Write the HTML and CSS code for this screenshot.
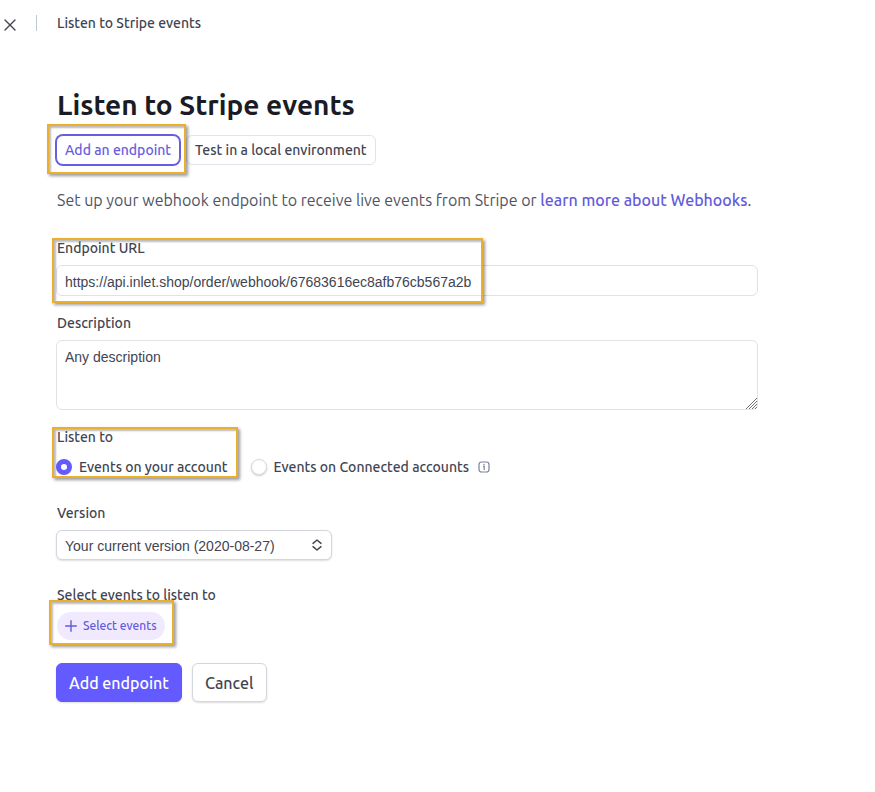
FILE: index.html
```html
<!DOCTYPE html>
<html lang="en">
<head>
<meta charset="utf-8">
<meta name="viewport" content="width=device-width, initial-scale=1">
<title>Listen to Stripe events</title>
<link rel="stylesheet" href="styles.css">
</head>
<body>
<header class="topbar">
  <button class="close" type="button" aria-label="Close">
    <svg width="12" height="12" viewBox="0 0 12 12" fill="none" stroke="currentColor" stroke-width="1.4" stroke-linecap="round"><path d="M1 1l10 10M11 1L1 11"/></svg>
  </button>
  <span class="divider"></span>
  <span class="crumb">Listen to Stripe events</span>
</header>
<main class="page">
  <h1>Listen to Stripe events</h1>
  <div class="tabs">
    <div class="marked mark-tab"><button class="tab active" type="button">Add an endpoint</button></div>
    <button class="tab" type="button">Test in a local environment</button>
  </div>
  <p class="intro">Set up your webhook endpoint to receive live events from Stripe or <a href="#webhooks">learn more about Webhooks</a>.</p>
  <form>
    <div class="field marked mark-url">
      <label for="url">Endpoint URL</label>
      <input class="control" id="url" type="text" value="https://api.inlet.shop/order/webhook/67683616ec8afb76cb567a2b">
    </div>
    <div class="field">
      <label for="description">Description</label>
      <div class="area">
        <textarea class="control" id="description">Any description</textarea>
        <svg width="11" height="11" viewBox="0 0 11 11" stroke="#6f6f6f" stroke-width="1"><path d="M0 11L11 0M3 11l8-8M6 11l5-5M9 11l2-2"/></svg>
      </div>
    </div>
    <div class="field marked mark-listen" role="group" aria-labelledby="listen-to">
      <span class="group-label" id="listen-to">Listen to</span>
      <div class="radios">
        <label class="choice"><input type="radio" name="source" checked>Events on your account</label>
        <label class="choice"><input type="radio" name="source">Events on Connected accounts</label>
        <svg class="info" width="12" height="12" viewBox="0 0 12 12" fill="none" stroke="currentColor"><rect x="1" y="1" width="10" height="10" rx="2.5" stroke-width="1.2"/><path d="M5 5.3h1.2V9" stroke-width="1.2"/><circle cx="6" cy="3.4" r=".75" fill="currentColor" stroke="none"/></svg>
      </div>
    </div>
    <div class="field version">
      <label for="version">Version</label>
      <div class="select">
        <select class="control" id="version"><option>Your current version (2020-08-27)</option></select>
        <svg width="10" height="12" viewBox="0 0 10 12" fill="none" stroke="currentColor" stroke-width="1.4" stroke-linecap="round" stroke-linejoin="round"><path d="M1 4.4L5 1l4 3.4M1 7.6L5 11l4-3.4"/></svg>
      </div>
    </div>
    <div class="field events">
      <label for="events">Select events to listen to</label>
      <div class="marked mark-events">
        <button class="pill" id="events" type="button">
          <svg width="12" height="12" viewBox="0 0 12 12" fill="none" stroke="currentColor" stroke-width="1.4" stroke-linecap="round"><path d="M6 .7v10.6M.7 6h10.6"/></svg>
          <span>Select events</span>
        </button>
      </div>
    </div>
    <div class="actions">
      <button class="button primary" type="submit">Add endpoint</button>
      <button class="button" type="button">Cancel</button>
    </div>
  </form>
</main>
</body>
</html>
```
FILE: styles.css
```css
*, *::after { box-sizing: border-box; }

body {
  margin: 0;
  background: #fff;
  color: #414552;
  font: 500 14px/20px Ubuntu, "Noto Sans", sans-serif;
}

button, input, select, textarea { font: inherit; color: inherit; margin: 0; }
button { cursor: pointer; white-space: nowrap; }

.topbar { display: flex; align-items: center; height: 46px; padding-left: 4px; }
.close { display: flex; padding: 4px 0 0; border: 0; background: none; }
.divider { width: 1px; height: 16px; margin: 0 20px; background: #c0c8d2; }
.crumb { white-space: nowrap; }

.page { max-width: 758px; padding: 41px 0 24px 56px; }
h1 {
  margin: 0 0 12px;
  padding-left: 1px;
  color: #1a1b25;
  font-size: 28px;
  line-height: 36px;
  font-weight: 600;
}

.tabs { display: flex; gap: 6px; }
.tab {
  display: block;
  height: 30px;
  padding: 0 8px;
  border: 1px solid #e0e3e9;
  border-radius: 6px;
  background: #fff;
}
.tab.active {
  border-color: #675dde;
  border-radius: 7px;
  box-shadow: 0 0 0 1px #675dde;
  color: #675dde;
}

.intro {
  margin: 23px 0 26px;
  padding-left: 1px;
  color: #50545f;
  font-size: 16px;
  line-height: 24px;
  font-weight: 400;
}
.intro a { color: #635bdb; font-weight: 500; text-decoration: none; }

.field { margin-bottom: 17px; }
.field > label, .group-label {
  display: block;
  width: fit-content;
  margin-bottom: 7px;
  padding-left: 1px;
}

.control {
  display: block;
  width: 100%;
  height: 31px;
  padding: 2px 8px 0;
  border: 1px solid #dfe2e7;
  border-radius: 6px;
  background: #fff;
  font-family: "Liberation Sans", Arial, sans-serif;
  font-weight: 400;
}
.area { position: relative; }
.area .control { height: 70px; padding: 6px 8px; resize: vertical; }
.area .control::-webkit-resizer { background: transparent; }
.area svg { position: absolute; right: 1px; bottom: 1px; pointer-events: none; }

.radios { display: flex; align-items: center; padding-top: 3px; }
.choice { display: flex; align-items: center; gap: 7px; margin-right: 23px; white-space: nowrap; }
.choice + .choice { margin-right: 9px; }
.choice input {
  appearance: none;
  width: 16px;
  height: 16px;
  border: 1px solid #d8dbe2;
  border-radius: 50%;
  background: #fff;
  box-shadow: 0 1px 2px #0003;
}
.choice input:checked { border: 5px solid #635bff; box-shadow: none; }
.info { color: #7a8296; }

.version { padding-top: 9px; }
.select { position: relative; width: 276px; max-width: 100%; }
.select select {
  appearance: none;
  height: 30px;
  padding-right: 28px;
  border-color: #d3d6dd;
  box-shadow: 0 1px 2px #0002;
}
.select svg { position: absolute; right: 10px; top: 9px; pointer-events: none; }

.events { padding-top: 8px; margin-bottom: 23px; }
.pill {
  display: flex;
  align-items: center;
  gap: 6px;
  height: 28px;
  padding: 0 8px;
  border: 0;
  border-radius: 14px;
  background: #f1eafe;
  color: #635bdb;
  font-size: 12px;
}

.actions { display: flex; gap: 10px; }
.button {
  height: 39px;
  padding: 0 12px;
  border: 1px solid #d3d6dd;
  border-radius: 6px;
  background: #fff;
  box-shadow: 0 1px 2px #0002;
  font-size: 16px;
}
.button.primary { border-color: #635bff; background: #635bff; color: #fff; }

/* Callout frames around the steps to follow */
.marked { position: relative; }
.mark-tab, .mark-events { width: fit-content; }
.mark-events { margin-left: 1px; }
.marked::after {
  content: "";
  position: absolute;
  border: 2px solid #ecae2b;
  box-shadow: 2px 2px 3px #0006, inset 2px 2px 2px #0004;
  pointer-events: none;
}
.mark-tab::after { inset: -11px -6px -9px -9px; }
.mark-url::after { top: 0; left: -4px; bottom: -7px; width: 431px; }
.mark-listen::after { top: 0; left: -4px; bottom: -1px; width: 186px; }
.mark-events::after { inset: -12px -9px -5px -8px; }
```
